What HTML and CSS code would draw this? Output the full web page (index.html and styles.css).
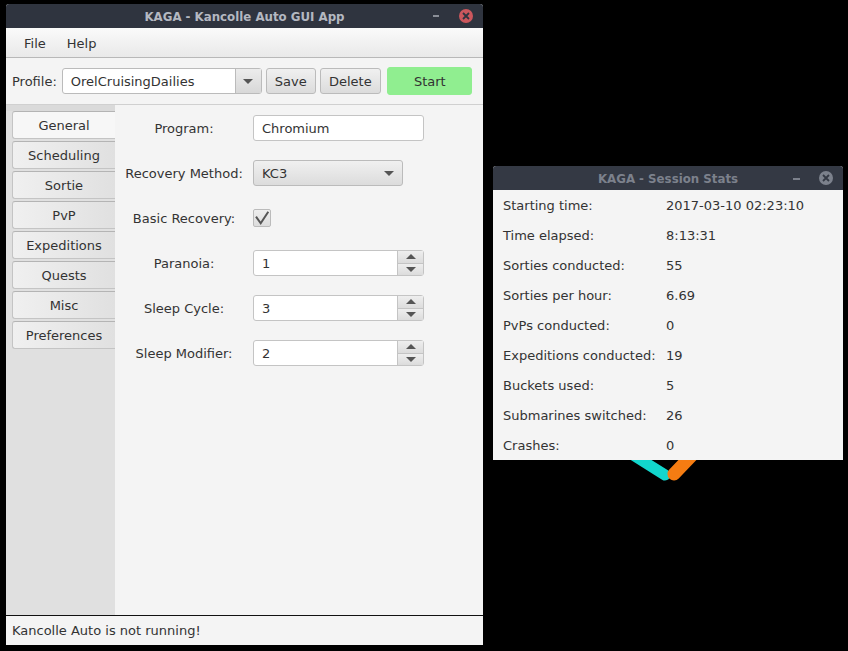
FILE: index.html
```html
<!DOCTYPE html>
<html lang="en">
<head>
<meta charset="utf-8">
<title>KAGA</title>
<link rel="stylesheet" href="styles.css">
</head>
<body>
<svg class="logo" width="80" height="40" viewBox="0 0 80 40" aria-hidden="true">
  <path d="M2 -2 L37 20" class="logo-cyan" />
  <path d="M68 -4 L46 19" class="logo-orange" />
</svg>

<section class="window main-window">
  <header class="titlebar">
    <span class="title">KAGA - Kancolle Auto GUI App</span>
    <span class="minimize"></span>
    <span class="close close-red"><svg width="8" height="8" viewBox="0 0 8 8"><path d="M1 1L7 7M7 1L1 7"/></svg></span>
  </header>
  <nav class="menubar"><span>File</span><span>Help</span></nav>
  <div class="toolbar">
    <span class="toolbar-label">Profile:</span>
    <div class="profile-combo">
      <span class="profile-value">OrelCruisingDailies</span>
      <span class="profile-arrow"><i class="arrow-down"></i></span>
    </div>
    <button class="btn save">Save</button>
    <button class="btn delete">Delete</button>
    <button class="btn start">Start</button>
  </div>
  <div class="content">
    <aside class="tabs">
      <div class="tab active">General</div>
      <div class="tab">Scheduling</div>
      <div class="tab">Sortie</div>
      <div class="tab">PvP</div>
      <div class="tab">Expeditions</div>
      <div class="tab">Quests</div>
      <div class="tab">Misc</div>
      <div class="tab">Preferences</div>
    </aside>
    <main class="form">
      <label>Program:</label>
      <div class="field text-field">Chromium</div>
      <label>Recovery Method:</label>
      <div class="field select"><span>KC3</span><i class="arrow-down"></i></div>
      <label>Basic Recovery:</label>
      <div class="checkbox"><svg width="16" height="16" viewBox="0 0 16 16"><path d="M2 6.7L6.7 13.3L14.3 1.7"/></svg></div>
      <label>Paranoia:</label>
      <div class="field spinner"><span class="spin-value">1</span><span class="spin-buttons"><span><i class="arrow-up"></i></span><span><i class="arrow-down"></i></span></span></div>
      <label>Sleep Cycle:</label>
      <div class="field spinner"><span class="spin-value">3</span><span class="spin-buttons"><span><i class="arrow-up"></i></span><span><i class="arrow-down"></i></span></span></div>
      <label>Sleep Modifier:</label>
      <div class="field spinner"><span class="spin-value">2</span><span class="spin-buttons"><span><i class="arrow-up"></i></span><span><i class="arrow-down"></i></span></span></div>
    </main>
  </div>
  <footer class="statusbar">Kancolle Auto is not running!</footer>
</section>

<section class="window stats-window">
  <header class="titlebar inactive">
    <span class="title">KAGA - Session Stats</span>
    <span class="minimize"></span>
    <span class="close close-grey"><svg width="8" height="8" viewBox="0 0 8 8"><path d="M1 1L7 7M7 1L1 7"/></svg></span>
  </header>
  <dl class="stats">
    <dt>Starting time:</dt><dd>2017-03-10 02:23:10</dd>
    <dt>Time elapsed:</dt><dd>8:13:31</dd>
    <dt>Sorties conducted:</dt><dd>55</dd>
    <dt>Sorties per hour:</dt><dd>6.69</dd>
    <dt>PvPs conducted:</dt><dd>0</dd>
    <dt>Expeditions conducted:</dt><dd>19</dd>
    <dt>Buckets used:</dt><dd>5</dd>
    <dt>Submarines switched:</dt><dd>26</dd>
    <dt>Crashes:</dt><dd>0</dd>
  </dl>
</section>
</body>
</html>
```
FILE: styles.css
```css
* { box-sizing: border-box; }
html, body { margin: 0; height: 100%; }
body {
  background: #000;
  font-family: "DejaVu Sans", sans-serif;
  font-size: 13px;
  color: #333;
  overflow: hidden;
  position: relative;
}
.logo { position: absolute; left: 628px; top: 455px; }
.logo path { fill: none; stroke-linecap: round; }
.logo-cyan { stroke: #12d6cc; stroke-width: 11; }
.logo-orange { stroke: #f57c12; stroke-width: 13; }

.window {
  position: absolute;
  display: flex;
  flex-direction: column;
  background: #f4f4f4;
  border-radius: 3px 3px 0 0;
  overflow: hidden;
}
.main-window { left: 6px; top: 4px; width: 477px; height: 641px; }
.stats-window { left: 493px; top: 166px; width: 350px; height: 294px; }

.titlebar {
  height: 24px;
  flex: none;
  padding-top: 1px;
  background: #2f343f;
  color: #b4b8c1;
  font-weight: bold;
  font-size: 11.8px;
  display: flex;
  align-items: center;
  justify-content: center;
  position: relative;
}
.titlebar.inactive { color: #7c818c; background: #343944; }
.minimize {
  position: absolute;
  right: 44px;
  top: 11px;
  width: 6px;
  height: 2px;
  background: #8a8e97;
}
.titlebar.inactive .minimize { right: 43px; width: 7px; top: 12px; background: #7c818c; }
.close {
  position: absolute;
  right: 10px;
  top: 5px;
  width: 14px;
  height: 14px;
  border-radius: 50%;
  display: flex;
  align-items: center;
  justify-content: center;
}
.close svg path { stroke-width: 1.8; fill: none; }
.close-red { background: #cc575d; }
.close-red svg path { stroke: #2f343f; }
.close-grey { background: #7c818c; }
.close-grey svg path { stroke: #343944; }

.menubar {
  height: 30px;
  flex: none;
  display: flex;
  align-items: center;
  gap: 21px;
  padding: 2px 0 0 18px;
  background: linear-gradient(#fafafa, #e9e9e9);
  border-bottom: 1px solid #b8b8b8;
}
.toolbar {
  height: 47px;
  flex: none;
  display: flex;
  align-items: center;
  padding: 0 11px 0 6px;
  background: #f4f4f4;
  border-bottom: 1px solid #d0d0d0;
}
.toolbar-label { margin-right: 5px; }
.profile-combo {
  width: 200px;
  height: 26px;
  display: flex;
  border: 1px solid #bbb;
  border-radius: 3px;
  background: #fff;
  margin-right: 4px;
}
.profile-value { flex: 1; padding: 1px 0 0 8px; line-height: 24px; }
.profile-arrow {
  width: 26px;
  border-left: 1px solid #bbb;
  background: linear-gradient(#ececec, #d8d8d8);
  display: flex;
  align-items: center;
  justify-content: center;
}
.arrow-down, .arrow-up {
  display: block;
  width: 0;
  height: 0;
  border-left: 5px solid transparent;
  border-right: 5px solid transparent;
}
.arrow-down { border-top: 5px solid #555; }
.arrow-up { border-bottom: 5px solid #555; }
.btn {
  height: 26px;
  font: inherit;
  color: #333;
  padding: 0;
  border: 1px solid #bbb;
  border-radius: 3px;
  background: linear-gradient(#f0f0f0, #dcdcdc);
}
.save { width: 50px; margin-right: 4px; }
.delete { width: 61px; margin-right: 6px; }
.start { width: 85px; height: 28px; padding-left: 1px; background: #90ee90; border-color: #90ee90; }

.content { flex: 1; display: flex; min-height: 0; }
.tabs {
  width: 109px;
  flex: none;
  background: linear-gradient(#dadada 6px, #e0e0e0 6px);
  padding: 6px 0 0 6px;
  display: flex;
  flex-direction: column;
  gap: 2px;
}
.tab {
  height: 28px;
  border: 1px solid #c4c4c4;
  border-top-color: #b4b4b4;
  border-right: 0;
  border-radius: 3px 0 0 3px;
  background: linear-gradient(90deg, #f0f0f0, #e0e0e0);
  display: flex;
  align-items: center;
  justify-content: center;
}
.tab.active { background: #f7f7f7; }
.form {
  flex: 1;
  display: grid;
  grid-template-columns: 118px 171px;
  grid-auto-rows: 26px;
  row-gap: 19px;
  column-gap: 10px;
  padding: 10px 0 0 10px;
  align-items: center;
  justify-items: start;
}
.form label { justify-self: center; }
.field {
  width: 171px;
  height: 26px;
  border: 1px solid #c4c4c4;
  border-radius: 3px;
  background: #fff;
  display: flex;
  align-items: center;
  padding-left: 8px;
}
.select {
  width: 150px;
  justify-content: space-between;
  padding-right: 8px;
  background: linear-gradient(#f0f0f0, #dcdcdc);
  border-color: #bbb;
}
.checkbox {
  width: 18px;
  height: 18px;
  border: 1px solid #bbb;
  border-radius: 2px;
  background: linear-gradient(#eeeeee, #dcdcdc);
  display: flex;
  align-items: center;
  justify-content: center;
}
.checkbox path { fill: none; stroke: #555; stroke-width: 2; }
.spinner { padding-left: 0; align-items: stretch; }
.spin-value { flex: 1; padding: 1px 0 0 8px; line-height: 24px; }
.spin-buttons {
  width: 26px;
  border-left: 1px solid #c4c4c4;
  display: flex;
  flex-direction: column;
}
.spin-buttons span {
  flex: 1;
  display: flex;
  align-items: center;
  justify-content: center;
  background: linear-gradient(#eeeeee, #dcdcdc);
}
.spin-buttons span + span { border-top: 1px solid #c4c4c4; }

.statusbar {
  height: 30px;
  flex: none;
  border-top: 1px solid #111;
  padding-left: 6px;
  display: flex;
  align-items: center;
  background: #f4f4f4;
}
.stats {
  margin: 0;
  flex: 1;
  display: grid;
  grid-template-columns: 163px 1fr;
  grid-auto-rows: 30px;
  padding-left: 10px;
  align-items: center;
}
.stats dt, .stats dd { margin: 0; }
```
